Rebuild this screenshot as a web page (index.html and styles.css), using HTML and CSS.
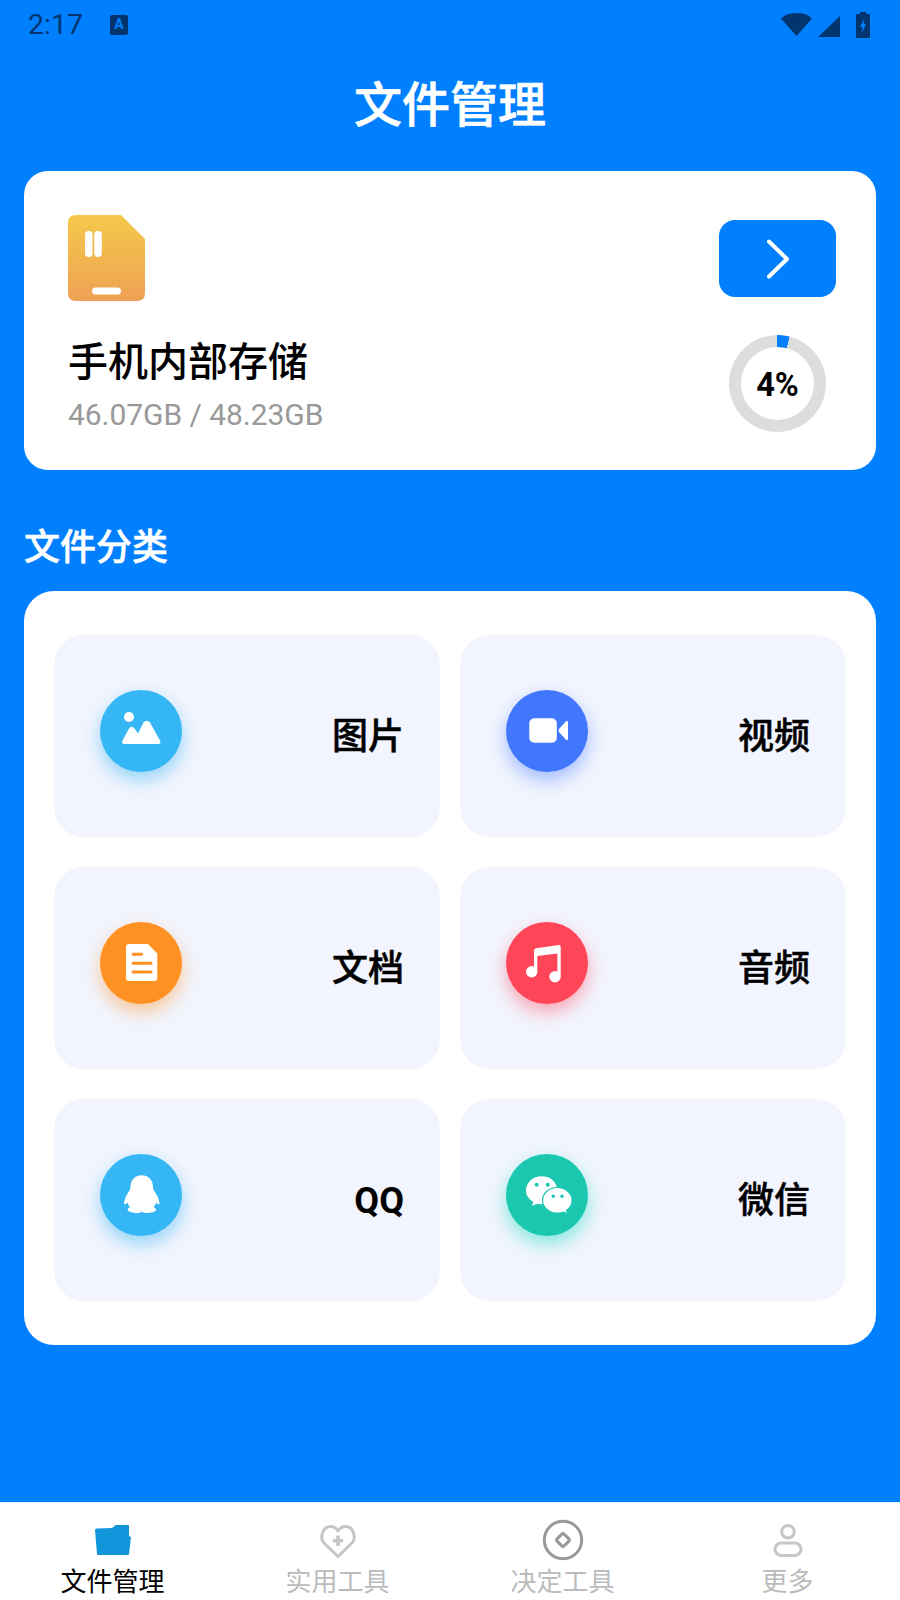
FILE: index.html
```html
<!DOCTYPE html>
<html lang="zh-CN">
<head>
<meta charset="utf-8">
<title>文件管理</title>
<link rel="stylesheet" href="styles.css">
</head>
<body>
<div class="app">
  <main class="main">
    <div class="status">
      <div class="status-left">
        <span class="time">2:17</span>
        <span class="a-icon">A</span>
      </div>
      <div class="status-right">
        <svg class="st-wifi" width="31" height="23" viewBox="0 0 31 23"><path d="M15.5 23 0 5.5C4 1.8 9.500 0 15.500 0S27 1.800 31 5.500Z"/></svg>
        <svg class="st-signal" width="22" height="21" viewBox="0 0 22 21"><path d="M22 0V21H0Z"/></svg>
        <svg class="st-batt" width="14" height="26" viewBox="0 0 14 26"><path d="M4 0H10V2H13Q14 2 14 3V25Q14 26 13 26H1Q0 26 0 25V3Q0 2 1 2H4Z"/><path class="bolt" d="M8.500 6 4 15H6.500L5.500 22 10 12H7.500Z"/></svg>
      </div>
    </div>
    <h1 class="title">文件管理</h1>

    <section class="storage card">
      <div class="storage-top">
        <svg class="sd-icon" width="77" height="86" viewBox="0 0 77 86">
          <defs><linearGradient id="sd" x1="0" y1="0" x2="0" y2="1"><stop offset="0" stop-color="#f5c94b"/><stop offset="1" stop-color="#eea154"/></linearGradient></defs>
          <path fill="url(#sd)" d="M8 0H53L77 24V78Q77 86 69 86H8Q0 86 0 78V8Q0 0 8 0Z"/>
          <rect x="17" y="16" width="7.500" height="26" rx="3.500" fill="#fff"/>
          <rect x="26.300" y="16" width="7.500" height="26" rx="3.500" fill="#fff"/>
          <rect x="24" y="72.500" width="29" height="7" rx="3.500" fill="#fff"/>
        </svg>
        <div class="go-btn">
          <svg width="24" height="40" viewBox="0 0 24 40"><path d="M3 2.500 21 20 3 37.500" fill="none" stroke="#fff" stroke-width="4" stroke-linecap="round" stroke-linejoin="round"/></svg>
        </div>
      </div>
      <div class="storage-bottom">
        <div class="storage-text">
          <div class="storage-name">手机内部存储</div>
          <div class="storage-size">46.07GB / 48.23GB</div>
        </div>
        <div class="donut"><div class="donut-inner">4%</div></div>
      </div>
    </section>

    <h2 class="section-title">文件分类</h2>

    <section class="cats card">
      <div class="tile">
        <div class="dot dot-sky">
          <svg width="82" height="82" viewBox="0 0 82 82" fill="#fff"><circle cx="29" cy="27" r="5"/><path d="M24.500 54Q21 54 22.500 50.500L29 38.500Q31.700 35 34.500 38.500L38 43.500 43.500 32.500Q46.700 29 50 32.500L60 50.500Q61.500 54 58 54Z"/></svg>
        </div>
        <div class="tile-label">图片</div>
      </div>
      <div class="tile">
        <div class="dot dot-blue">
          <svg width="82" height="82" viewBox="0 0 82 82" fill="#fff"><rect x="23.300" y="28.300" width="27.500" height="24.500" rx="5"/><path d="M53 39 60 31.200Q62 30 62 32.500V48.500Q62 51 60 49.800L53 42Q52 40.500 53 39Z"/></svg>
        </div>
        <div class="tile-label">视频</div>
      </div>
      <div class="tile">
        <div class="dot dot-orange">
          <svg width="82" height="82" viewBox="0 0 82 82"><path fill="#fff" d="M29 22H48L57.300 31.500V56Q57.300 59 54.300 59H29Q26 59 26 56V25Q26 22 29 22Z"/><path d="M33 32.300H41.500M33 41.300H51M33 50H51" stroke="#ff9122" stroke-width="3" stroke-linecap="round"/></svg>
        </div>
        <div class="tile-label">文档</div>
      </div>
      <div class="tile">
        <div class="dot dot-red">
          <svg width="82" height="82" viewBox="0 0 82 82" fill="#fff"><circle cx="25.700" cy="49.700" r="5.700"/><circle cx="49" cy="54.700" r="5.700"/><path d="M28 29Q28 26.500 30 26.300L53 23Q54.700 23 54.700 25V55H51.400V31.500L31.300 34V50H28Z"/></svg>
        </div>
        <div class="tile-label">音频</div>
      </div>
      <div class="tile">
        <div class="dot dot-sky">
          <svg width="82" height="82" viewBox="0 0 82 82" fill="#fff"><path d="M41.700 21.300C34.500 21.300 30.500 26.500 30.500 33C30.500 36.500 27 39.500 25.500 43.500C24.500 46 24 48 24 50C25 50.500 26.500 50 27.500 48.500C28 50.500 29 52 30 53C28 54 27.500 55 27.700 56C28.500 58 33 59 37 59C39 59 40.500 58.500 41.700 57.500C43 58.500 44.500 59 46.500 59C50.500 59 55.500 58 56 56C56.200 55 55.500 54 53.500 53C54.500 52 55.500 50.500 56 48.500C57 50 58.500 50.500 59.500 50C59.500 48 59 46 58 43.500C56.500 39.500 53 36.500 53 33C53 26.500 49 21.300 41.700 21.300Z"/></svg>
        </div>
        <div class="tile-label tile-latin">QQ</div>
      </div>
      <div class="tile">
        <div class="dot dot-teal">
          <svg width="82" height="82" viewBox="0 0 82 82">
            <path fill="#fff" d="M35.700 22.300C27 22.300 20 28.500 20 36.300C20 41.500 23 45.500 27.500 48L25.700 51.800 31.500 49.700C33 50.100 34.300 50.300 35.700 50.300C44.400 50.300 51.400 44.100 51.400 36.300S44.400 22.300 35.700 22.300Z"/>
            <ellipse cx="51.300" cy="46.300" rx="14.800" ry="12.800" fill="#fff" stroke="#1ac8b0" stroke-width="1.200"/>
            <path fill="#fff" d="M55 56 60.500 59 59.500 54Z"/>
            <g fill="#1ac8b0"><circle cx="30.700" cy="30.700" r="2"/><circle cx="41.700" cy="30.700" r="2"/><circle cx="47.300" cy="42.300" r="1.700"/><circle cx="56" cy="42.300" r="1.700"/></g>
          </svg>
        </div>
        <div class="tile-label">微信</div>
      </div>
    </section>
  </main>

  <nav class="nav">
    <div class="nav-item nav-active">
      <svg width="44" height="44" viewBox="0 0 44 44"><path fill="#1296db" d="M4 12Q4 10.500 6 10.500L21 10 25 7H37Q38 7 38 8V18L40 19 38 36Q38 37 37 37H7Q6 37 6 36Z"/></svg>
      <span>文件管理</span>
    </div>
    <div class="nav-item">
      <svg width="44" height="44" viewBox="0 0 44 44" fill="none" stroke="#c6c6c6" stroke-width="3"><path d="M22 38.500 8.500 25.500C3 20 6.500 8.500 14.500 8.500 18 8.500 20.500 10.500 22 13 23.500 10.500 26 8.500 29.500 8.500 37.500 8.500 41 20 35.500 25.500Z" stroke-linejoin="round"/><path d="M22 17.500V28M16.800 22.800H27.200" stroke-width="3.600"/></svg>
      <span>实用工具</span>
    </div>
    <div class="nav-item">
      <svg width="44" height="44" viewBox="0 0 44 44" fill="none" stroke="#999" stroke-width="3"><circle cx="22" cy="22" r="18.700"/><rect x="17" y="17" width="10" height="10" rx="2" transform="rotate(45 22 22)"/></svg>
      <span>决定工具</span>
    </div>
    <div class="nav-item">
      <svg width="44" height="44" viewBox="0 0 44 44" fill="none" stroke="#c6c6c6" stroke-width="3"><circle cx="22" cy="13.700" r="6.300"/><rect x="9" y="25" width="26" height="12.500" rx="6.250"/></svg>
      <span>更多</span>
    </div>
  </nav>
</div>
</body>
</html>
```

FILE: styles.css
```css
* { box-sizing: border-box; }

html, body {
  margin: 0;
  padding: 0;
}

body {
  font-family: "Noto Sans CJK SC", Roboto, sans-serif;
  color: #000;
}

.app {
  width: 900px;
  height: 1600px;
  display: flex;
  flex-direction: column;
  background: #007fff;
  overflow: hidden;
}

.main {
  flex: 1;
  padding: 0 24px;
}

/* status bar */
.status {
  height: 50px;
  margin: 0 -24px;
  padding: 0 30px 0 28px;
  display: flex;
  align-items: center;
  justify-content: space-between;
  color: #02356e;
}

.status-left {
  display: flex;
  align-items: center;
  gap: 27px;
}

.time {
  font-family: Roboto, sans-serif;
  font-size: 28.5px;
  line-height: 32px;
}

.a-icon {
  width: 18px;
  height: 20px;
  border-radius: 2px;
  background: #02356e;
  color: #007fff;
  font-family: Roboto, sans-serif;
  font-size: 14px;
  font-weight: 700;
  line-height: 18px;
  text-align: center;
}

.status-right {
  display: flex;
  align-items: center;
  gap: 6px;
  fill: #02356e;
}

.st-signal { margin-top: 2px; margin-right: 10px; }
.st-wifi { margin-top: -1px; }
.bolt { fill: #007fff; }

.title {
  margin: 0;
  height: 121px;
  padding-bottom: 20px;
  display: flex;
  align-items: center;
  justify-content: center;
  color: #fff;
  font-size: 48px;
  font-weight: 500;
  line-height: 64px;
  -webkit-text-stroke: 0.6px #fff;
}

.card {
  background: #fff;
  border-radius: 24px;
}

/* storage card */
.storage {
  height: 299px;
  padding: 44px 40px 38px 44px;
}

.storage-top {
  display: flex;
  justify-content: space-between;
  align-items: flex-start;
}

.sd-icon { display: block; }

.go-btn {
  width: 117px;
  height: 77px;
  margin-top: 5px;
  border-radius: 16px;
  background: #007fff;
  display: flex;
  align-items: center;
  justify-content: center;
}

.storage-bottom {
  margin-top: 31px;
  padding-right: 10px;
  display: flex;
  justify-content: space-between;
  align-items: center;
}

.storage-text { padding-bottom: 2px; }

.storage-name {
  font-size: 40px;
  font-weight: 500;
  line-height: 54px;
}

.storage-size {
  margin-top: 11px;
  color: #999;
  font-family: Roboto, sans-serif;
  font-size: 30px;
  line-height: 36px;
  letter-spacing: -0.05px;
}

.donut {
  width: 97px;
  height: 97px;
  border-radius: 50%;
  background: conic-gradient(#007fff 0 4%, #ddd 4% 100%);
  display: flex;
  align-items: center;
  justify-content: center;
}

.donut-inner {
  width: 73px;
  height: 73px;
  padding-top: 2px;
  border-radius: 50%;
  background: #fff;
  display: flex;
  align-items: center;
  justify-content: center;
  font-family: Roboto, sans-serif;
  font-size: 32.5px;
  font-weight: 700;
}

.section-title {
  margin: 49px 0 22px;
  color: #fff;
  font-size: 36px;
  font-weight: 500;
  line-height: 50px;
  -webkit-text-stroke: 0.5px #fff;
}

/* categories */
.cats {
  padding: 44px 30px;
  border-radius: 30px;
  display: grid;
  grid-template-columns: 386px 386px;
  grid-auto-rows: 202px;
  column-gap: 20px;
  row-gap: 30px;
}

.tile {
  padding: 0 36px 0 46px;
  border-radius: 30px;
  background: #f2f5fe;
  display: flex;
  align-items: center;
  justify-content: space-between;
}

.dot {
  width: 82px;
  height: 82px;
  margin-top: -10px;
  border-radius: 50%;
}

.dot svg { display: block; }

.dot-sky { background: #35b6f5; box-shadow: 0 8px 18px rgba(53, 182, 245, .5); }
.dot-blue { background: #4177fd; box-shadow: 0 8px 18px rgba(65, 119, 253, .45); }
.dot-orange { background: #ff9122; box-shadow: 0 8px 18px rgba(255, 145, 34, .45); }
.dot-red { background: #ff4558; box-shadow: 0 8px 18px rgba(255, 69, 88, .45); }
.dot-teal { background: #1ac8b0; box-shadow: 0 8px 18px rgba(26, 220, 190, .5); }

.tile-label {
  margin-bottom: 6px;
  font-size: 36px;
  font-weight: 500;
  line-height: 50px;
  -webkit-text-stroke: 0.5px #000;
}

.tile-latin {
  margin: 2px 0 0;
  font-family: Roboto, sans-serif;
  font-weight: 700;
  -webkit-text-stroke: 0;
}

/* bottom nav */
.nav {
  height: 98px;
  background: #fff;
  border-top: 1px solid #eee;
  display: grid;
  grid-template-columns: repeat(4, 225px);
}

.nav-item {
  padding-top: 15px;
  display: flex;
  flex-direction: column;
  align-items: center;
  color: #bbb;
  font-size: 26px;
  line-height: 32px;
}

.nav-item svg { display: block; margin-bottom: 2px; }

.nav-active { color: #000; }
```
